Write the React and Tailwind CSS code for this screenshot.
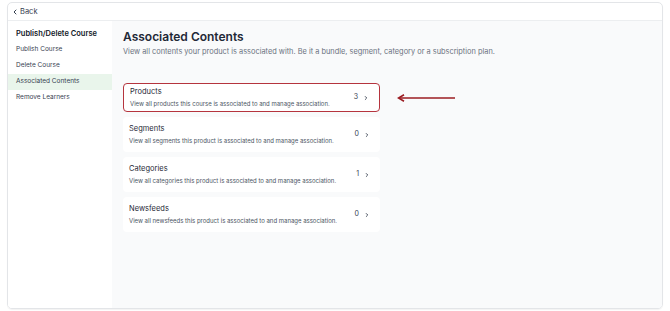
import React from "react";
import { ChevronLeft, ChevronRight } from "lucide-react";

const ITEMS = [
  { title: "Products", desc: "View all products this course is associated to and manage association.", count: 3, hl: true },
  { title: "Segments", desc: "View all segments this product is associated to and manage association.", count: 0 },
  { title: "Categories", desc: "View all categories this product is associated to and manage association.", count: 1 },
  { title: "Newsfeeds", desc: "View all newsfeeds this product is associated to and manage association.", count: 0 },
];

const NAV = ["Publish Course", "Delete Course", "Associated Contents", "Remove Learners"];

export default function App() {
  return (
    <div className="w-[670px] h-[311px] bg-white pt-[2px] px-[7px] pb-[2px] font-['Inter',sans-serif] text-[#1f2937]">
      <div className="h-full flex flex-col border border-[#e3e5e8] rounded-[5px] overflow-hidden shadow-[0_1px_1px_rgba(0,0,0,0.05)]">
        <div className="h-[18px] shrink-0 flex items-center gap-[1px] pl-[3px] border-b border-[#eceef0] text-[7.5px] text-[#374151]">
          <ChevronLeft size={8} strokeWidth={3} />
          <span>Back</span>
        </div>
        <div className="flex flex-1 min-h-0">
          <div className="w-[104px] shrink-0 bg-white pt-[5px]">
            <div className="pl-[8px] h-[16px] flex items-center text-[7.5px] font-semibold text-[#111827]">
              Publish/Delete Course
            </div>
            {NAV.map((n) => (
              <div
                key={n}
                className={`pl-[8px] h-[16px] flex items-center text-[6.5px] text-[#374151] ${
                  n === "Associated Contents" ? "bg-[#e9f5eb]" : ""
                }`}
              >
                {n}
              </div>
            ))}
          </div>
          <div className="flex-1 bg-[#f9fafb] pl-[11px] pt-[8px]">
            <h1 className="text-[12px] font-semibold text-[#1f2937] leading-[16px]">Associated Contents</h1>
            <p className="text-[7.4px] text-[#6b7280] leading-[11px] mt-[1px]">
              View all contents your product is associated with. Be it a bundle, segment, category or a subscription plan.
            </p>
            <div className="mt-[26px] flex flex-col gap-[5px] w-[257px]">
              {ITEMS.map((it) => (
                <div key={it.title} className="flex items-center">
                  <div
                    className={`w-[257px] shrink-0 bg-white rounded-[4px] flex items-center justify-between pl-[6px] pr-[10px] ${
                      it.hl ? "h-[29px] border border-[#b5343e]" : "h-[35px]"
                    }`}
                  >
                    <div className="flex flex-col gap-[4px]">
                      <div className="text-[7.5px] leading-[9px] text-[#1f2937]">{it.title}</div>
                      <div className="text-[6px] leading-[8px] text-[#4b5563]">{it.desc}</div>
                    </div>
                    <div className="flex items-center gap-[5px] text-[7px] text-[#374151]">
                      <span>{it.count}</span>
                      <ChevronRight size={6} strokeWidth={3.5} />
                    </div>
                  </div>
                  {it.hl && (
                    <svg width="60" height="8" viewBox="0 0 60 8" className="ml-[17px] shrink-0">
                      <line x1="2" y1="4" x2="58" y2="4" stroke="#9b1c22" strokeWidth="1.6" />
                      <path d="M7 0.8 L1.5 4 L7 7.2" fill="none" stroke="#9b1c22" strokeWidth="1.6" />
                    </svg>
                  )}
                </div>
              ))}
            </div>
          </div>
        </div>
      </div>
    </div>
  );
}
